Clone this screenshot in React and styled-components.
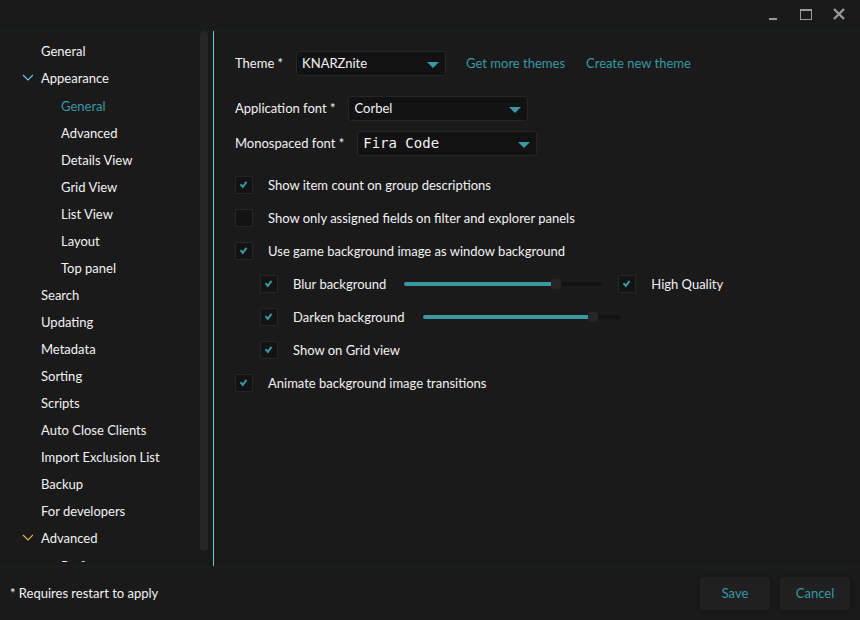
import React, { useState } from "react";
import styled, { createGlobalStyle } from "styled-components";

const accent = "#3898a4";

const GlobalStyle = createGlobalStyle`
  *, *::before, *::after { box-sizing: border-box; }
  body { margin: 0; background: #1a1a1a; }
  button, input, select { font: inherit; color: inherit; margin: 0; }
`;

const Window = styled.div`
  display: flex;
  flex-direction: column;
  height: 100vh;
  overflow: hidden;
  background: #1a1a1a;
  color: #f2f2f2;
  font: 13px/18px Lato, "Noto Sans", sans-serif;
`;

const TitleBar = styled.header`
  display: flex;
  justify-content: flex-end;
  flex: none;
  height: 31px;
  padding-right: 5px;
  border-bottom: 1px solid #162124;
`;

const CaptionButton = styled.button`
  display: flex;
  align-items: center;
  justify-content: center;
  width: 33px;
  height: 28px;
  padding: 0;
  border: 0;
  background: none;
  color: #999;
`;

const Body = styled.div`
  display: flex;
  flex: 1;
  min-height: 0;
`;

const Sidebar = styled.aside`
  display: flex;
  flex: none;
  width: 214px;
  padding-right: 5px;
  border-right: 1px solid #65c8cc;
`;

const TreeViewport = styled.nav`
  flex: 1;
  overflow: hidden;
  margin-bottom: 4px;
  padding: 6px 0 0 21px;
`;

const TreeList = styled.ul`
  list-style: none;
  margin: 0;
  padding: 0;
`;

const SubList = styled(TreeList)`
  padding: 1px 0 0 20px;
`;

const TreeItem = styled.button`
  display: flex;
  align-items: center;
  width: 100%;
  height: 27px;
  padding: 0;
  border: 0;
  background: none;
  text-align: left;
  white-space: nowrap;
  color: ${(p) => (p.$selected ? accent : "inherit")};
`;

const Expander = styled.span`
  display: flex;
  width: 20px;
  flex: none;
  color: ${(p) => p.$color};
`;

const ScrollTrack = styled.div`
  width: 8px;
  flex: none;
  padding-bottom: 15px;
`;

const ScrollThumb = styled.div`
  height: 100%;
  border-radius: 4px;
  background: #262626;
`;

const Content = styled.main`
  flex: 1;
  min-width: 0;
  padding: 20px 21px;
`;

const FieldRow = styled.div`
  display: flex;
  align-items: center;
  gap: 13px;
  margin-bottom: ${(p) => (p.$spaced ? "20px" : "10px")};
`;

const FieldLabel = styled.label`
  padding-bottom: 1px;
`;

const SelectBox = styled.div`
  position: relative;
  width: ${(p) => p.$width};
`;

const Select = styled.select`
  display: block;
  appearance: none;
  width: 100%;
  height: 25px;
  padding: 0 24px 2px 5px;
  border: 1px solid #262626;
  border-radius: 3px;
  background: #121212;
  font: ${(p) => (p.$mono ? '14px "DejaVu Sans Mono", monospace' : "inherit")};
`;

const Arrow = styled.svg`
  position: absolute;
  right: 7px;
  top: 11px;
  pointer-events: none;
`;

const Links = styled.div`
  display: flex;
  gap: 21px;
  margin-left: 7px;
  padding-bottom: 1px;
`;

const Link = styled.a`
  color: ${accent};
  text-decoration: none;
`;

const OptionRow = styled.div`
  display: flex;
  align-items: center;
  height: 18px;
  margin-bottom: 15px;
  padding-left: ${(p) => (p.$nested ? "25px" : "0")};
`;

const CheckLabel = styled.label`
  display: flex;
  align-items: center;
  gap: 15px;
  white-space: nowrap;
`;

const CheckFrame = styled.span`
  display: grid;
  width: 18px;
  height: 18px;
  > * { grid-area: 1 / 1; place-self: center; }
`;

const CheckInput = styled.input`
  appearance: none;
  width: 18px;
  height: 18px;
  border: 1px solid #262626;
  border-radius: 1px;
  background: #131313;
  & + svg { visibility: hidden; pointer-events: none; z-index: 1; }
  &:checked + svg { visibility: visible; }
`;

const Range = styled.input`
  appearance: none;
  width: 198px;
  height: 10px;
  margin: 0 16px 0 18px;
  background: none;
  &::-webkit-slider-runnable-track {
    height: 4px;
    border-radius: 2px;
    background: linear-gradient(to right, ${accent} ${(p) => p.value}%, #131313 ${(p) => p.value}%);
  }
  &::-webkit-slider-thumb {
    appearance: none;
    width: 10px;
    height: 10px;
    margin-top: -3px;
    border-radius: 3px;
    background: #262626;
  }
`;

const Footer = styled.footer`
  display: flex;
  align-items: center;
  justify-content: space-between;
  flex: none;
  height: 54px;
  padding: 0 10px;
  border-top: 1px solid #162124;
`;

const Note = styled.span`
  padding-bottom: 2px;
`;

const Actions = styled.div`
  display: flex;
  gap: 10px;
`;

const ActionButton = styled.button`
  width: 70px;
  height: 33px;
  padding: 0 0 2px;
  border: 0;
  border-radius: 3px;
  background: #202020;
  box-shadow: 0 0 4px #141414;
  color: ${accent};
`;

const tree = [
  { label: "General" },
  {
    label: "Appearance",
    chevron: "#79c4e0",
    children: ["General", "Advanced", "Details View", "Grid View", "List View", "Layout", "Top panel"],
  },
  { label: "Search" },
  { label: "Updating" },
  { label: "Metadata" },
  { label: "Sorting" },
  { label: "Scripts" },
  { label: "Auto Close Clients" },
  { label: "Import Exclusion List" },
  { label: "Backup" },
  { label: "For developers" },
  { label: "Advanced", chevron: "#e0b25c", children: ["Performance"] },
];

function Dropdown({ id, value, width, mono }) {
  return (
    <SelectBox $width={width}>
      <Select id={id} defaultValue={value} $mono={mono}>
        <option>{value}</option>
      </Select>
      <Arrow width="12" height="6" viewBox="0 0 12 6" aria-hidden="true">
        <path d="M0 0H12L6 6Z" fill={accent} />
      </Arrow>
    </SelectBox>
  );
}

function Check({ label, checked = true }) {
  return (
    <CheckLabel>
      <CheckFrame>
        <CheckInput type="checkbox" defaultChecked={checked} />
        <svg width="8" height="8" viewBox="0 0 8 8" fill="none" stroke={accent} strokeWidth="2" aria-hidden="true">
          <path d="M0.5 3.2L2.8 5.8L6.5 0.8" />
        </svg>
      </CheckFrame>
      {label}
    </CheckLabel>
  );
}

function Slider({ label, initial }) {
  const [value, setValue] = useState(initial);
  return <Range type="range" aria-label={label} value={value} onChange={(e) => setValue(e.target.value)} />;
}

export default function App() {
  return (
    <Window>
      <GlobalStyle />
      <TitleBar>
        <CaptionButton aria-label="Minimize">
          <svg width="14" height="14" viewBox="0 0 14 14"><path d="M3 11H11V13H3Z" fill="currentColor" /></svg>
        </CaptionButton>
        <CaptionButton aria-label="Maximize">
          <svg width="12" height="12" viewBox="0 0 12 12">
            <path fillRule="evenodd" d="M0 1H12V12H0ZM1 3V11H11V3Z" fill="currentColor" />
          </svg>
        </CaptionButton>
        <CaptionButton aria-label="Close">
          <svg width="12" height="12" viewBox="0 0 12 12"><path d="M1 1L11 11M11 1L1 11" stroke="currentColor" strokeWidth="2.4" /></svg>
        </CaptionButton>
      </TitleBar>
      <Body>
        <Sidebar>
          <TreeViewport>
            <TreeList>
              {tree.map((node) => (
                <li key={node.label}>
                  <TreeItem>
                    <Expander $color={node.chevron}>
                      {node.chevron && (
                        <svg width="12" height="8" viewBox="0 0 12 8" fill="none" stroke="currentColor" strokeWidth="1.2" aria-hidden="true">
                          <path d="M2 1L7 6L12 1" />
                        </svg>
                      )}
                    </Expander>
                    {node.label}
                  </TreeItem>
                  {node.children && (
                    <SubList>
                      {node.children.map((child) => (
                        <li key={child}>
                          <TreeItem $selected={child === "General"}>
                            <Expander />
                            {child}
                          </TreeItem>
                        </li>
                      ))}
                    </SubList>
                  )}
                </li>
              ))}
            </TreeList>
          </TreeViewport>
          <ScrollTrack>
            <ScrollThumb />
          </ScrollTrack>
        </Sidebar>
        <Content>
          <FieldRow $spaced>
            <FieldLabel htmlFor="theme">Theme *</FieldLabel>
            <Dropdown id="theme" value="KNARZnite" width="150px" />
            <Links>
              <Link href="#themes">Get more themes</Link>
              <Link href="#create">Create new theme</Link>
            </Links>
          </FieldRow>
          <FieldRow>
            <FieldLabel htmlFor="app-font">Application font *</FieldLabel>
            <Dropdown id="app-font" value="Corbel" width="180px" />
          </FieldRow>
          <FieldRow $spaced>
            <FieldLabel htmlFor="mono-font">Monospaced font *</FieldLabel>
            <Dropdown id="mono-font" value="Fira Code" width="180px" mono />
          </FieldRow>
          <OptionRow><Check label="Show item count on group descriptions" /></OptionRow>
          <OptionRow><Check label="Show only assigned fields on filter and explorer panels" checked={false} /></OptionRow>
          <OptionRow><Check label="Use game background image as window background" /></OptionRow>
          <OptionRow $nested>
            <Check label="Blur background" />
            <Slider label="Blur amount" initial={78} />
            <Check label="High Quality" />
          </OptionRow>
          <OptionRow $nested>
            <Check label="Darken background" />
            <Slider label="Darken amount" initial={88} />
          </OptionRow>
          <OptionRow $nested><Check label="Show on Grid view" /></OptionRow>
          <OptionRow><Check label="Animate background image transitions" /></OptionRow>
        </Content>
      </Body>
      <Footer>
        <Note>* Requires restart to apply</Note>
        <Actions>
          <ActionButton>Save</ActionButton>
          <ActionButton>Cancel</ActionButton>
        </Actions>
      </Footer>
    </Window>
  );
}
